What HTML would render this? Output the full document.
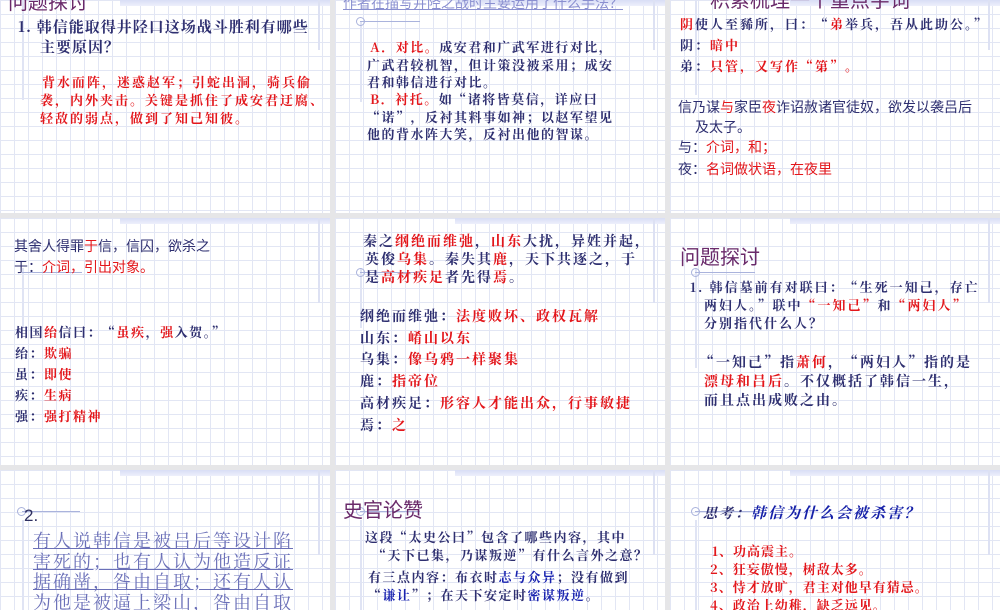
<!DOCTYPE html>
<html><head><meta charset="utf-8"><style>
*{margin:0;padding:0;box-sizing:border-box}
body{width:1000px;height:600px;background:#e6e6e8;position:relative;overflow:hidden;font-family:"Liberation Serif","Noto Serif CJK SC",serif}
.s{position:absolute;overflow:hidden;background-color:#fff;
background-image:linear-gradient(to right,#e2e6f4 1px,transparent 1px),linear-gradient(to bottom,#e2e6f4 1px,transparent 1px);
background-size:14px 14px}
.s .band{position:absolute;top:0;left:120px;right:0;height:6px;background:linear-gradient(#d8def5,#eef0fb)}
.s .vr{position:absolute;width:2px;background:#dde1f3}
.s .vl{position:absolute;width:2px;background:#e0e4f4}
.s .hl{position:absolute;height:1px;background:#aab3dc}
.s .ci{position:absolute;width:9px;height:9px;border:1px solid #aab3dc;border-radius:50%}
.t{position:absolute;white-space:nowrap;color:#2e2f70;font-weight:bold;letter-spacing:2px;font-family:"Noto Serif CJK SC","Liberation Serif",serif}
.n{font-weight:normal;letter-spacing:0;font-family:"Liberation Sans","Noto Sans CJK SC",sans-serif}
.r{color:#e3161b}
.p{color:#6a2a6a;font-weight:normal;letter-spacing:0;font-family:"Liberation Sans","Noto Sans CJK SC",sans-serif}
</style></head><body>

<!-- Row 1 -->
<div class="s" style="left:0;top:0;width:330px;height:213px">
<div class="band"></div><div class="vr" style="left:318px;top:0;height:50px"></div><div class="vl" style="left:22px;top:0;height:100px"></div>
<div class="t p" style="left:8px;top:-14px;font-size:20px">问题探讨</div>
<div class="t" style="left:18px;top:16px;font-size:15px;letter-spacing:1px">1. 韩信能取得井陉口这场战斗胜利有哪些</div>
<div class="t" style="left:40px;top:36px;font-size:15px;letter-spacing:1px">主要原因？</div>
<div class="t r" style="left:42px;top:72px;font-size:13px">背水而阵，迷惑赵军；引蛇出洞，骑兵偷</div>
<div class="t r" style="left:40px;top:90px;font-size:13px">袭，内外夹击。关键是抓住了成安君迂腐、</div>
<div class="t r" style="left:40px;top:108px;font-size:13px">轻敌的弱点，做到了知己知彼。</div>
</div>

<div class="s" style="left:335px;top:0;width:330px;height:213px">
<div class="band"></div><div class="vr" style="left:318px;top:0;height:50px"></div><div class="vl" style="left:25px;top:22px;height:80px"></div>
<div class="ci" style="left:21px;top:17px"></div><div class="hl" style="left:25px;top:21px;width:60px"></div>
<div class="t n" style="left:8px;top:-7px;font-size:14px;color:#8a8fd0;text-decoration:underline">作者在描写井陉之战时主要运用了什么手法？</div>
<div class="t" style="left:35px;top:37px;font-size:13px;letter-spacing:1.5px"><span class="r">A．对比。</span>成安君和广武军进行对比，</div>
<div class="t" style="left:32px;top:55px;font-size:13px;letter-spacing:1.5px">广武君较机智，但计策没被采用；成安</div>
<div class="t" style="left:32px;top:72px;font-size:13px;letter-spacing:1.5px">君和韩信进行对比。</div>
<div class="t" style="left:35px;top:89px;font-size:13px;letter-spacing:1.5px"><span class="r">B．衬托。</span>如“诸将皆莫信，详应曰</div>
<div class="t" style="left:32px;top:107px;font-size:13px;letter-spacing:1.5px">“诺”，反衬其料事如神；以赵军望见</div>
<div class="t" style="left:32px;top:124px;font-size:13px;letter-spacing:1.5px">他的背水阵大笑，反衬出他的智谋。</div>
</div>

<div class="s" style="left:670px;top:0;width:330px;height:213px">
<div class="band"></div><div class="vr" style="left:318px;top:0;height:50px"></div><div class="vl" style="left:25px;top:0;height:95px"></div>
<div class="t p" style="left:40px;top:-16px;font-size:20px">积累梳理一个重点字词</div>
<div class="t" style="left:10px;top:14px;font-size:13px"><span class="r">阴</span>使人至豨所，曰：“<span class="r">弟</span>举兵，吾从此助公。”</div>
<div class="t" style="left:10px;top:35px;font-size:13px">阴：<span class="r">暗中</span></div>
<div class="t" style="left:10px;top:56px;font-size:13px">弟：<span class="r">只管，又写作“第”。</span></div>
<div class="t n" style="left:8px;top:97px;font-size:14px">信乃谋<span class="r">与</span>家臣<span class="r">夜</span>诈诏赦诸官徒奴，欲发以袭吕后</div>
<div class="t n" style="left:25px;top:117px;font-size:14px">及太子。</div>
<div class="t n" style="left:8px;top:137px;font-size:14px">与：<span class="r">介词，和；</span></div>
<div class="t n" style="left:8px;top:159px;font-size:14px">夜：<span class="r">名词做状语，在夜里</span></div>
</div>

<!-- Row 2 -->
<div class="s" style="left:0;top:218px;width:330px;height:247px">
<div class="band"></div><div class="vr" style="left:318px;top:0;height:85px"></div><div class="vl" style="left:22px;top:50px;height:60px"></div>
<div class="hl" style="left:22px;top:54px;width:60px"></div>
<div class="t n" style="left:14px;top:18px;font-size:14px">其舍人得罪<span class="r">于</span>信，信囚，欲杀之</div>
<div class="t n" style="left:14px;top:39px;font-size:14px">于：<span class="r">介词，引出对象。</span></div>
<div class="t" style="left:15px;top:104px;font-size:13px;letter-spacing:1.5px">相国<span class="r">绐</span>信曰：“<span class="r">虽疾</span>，<span class="r">强</span>入贺。”</div>
<div class="t" style="left:15px;top:125px;font-size:13px;letter-spacing:1.5px">绐：<span class="r">欺骗</span></div>
<div class="t" style="left:15px;top:146px;font-size:13px;letter-spacing:1.5px">虽：<span class="r">即使</span></div>
<div class="t" style="left:15px;top:167px;font-size:13px;letter-spacing:1.5px">疾：<span class="r">生病</span></div>
<div class="t" style="left:15px;top:188px;font-size:13px;letter-spacing:1.5px">强：<span class="r">强打精神</span></div>
</div>

<div class="s" style="left:335px;top:218px;width:330px;height:247px">
<div class="band"></div><div class="vr" style="left:318px;top:0;height:85px"></div><div class="vl" style="left:25px;top:50px;height:60px"></div>
<div class="ci" style="left:21px;top:50px"></div><div class="hl" style="left:25px;top:54px;width:60px"></div>
<div class="t" style="left:28px;top:13px;font-size:14px">秦之<span class="r">纲绝而维弛</span>，<span class="r">山东</span>大扰，异姓并起，</div>
<div class="t" style="left:30px;top:31px;font-size:14px">英俊<span class="r">乌集</span>。秦失其<span class="r">鹿</span>，天下共逐之，于</div>
<div class="t" style="left:30px;top:49px;font-size:14px">是<span class="r">高材疾足</span>者先得<span class="r">焉</span>。</div>
<div class="t" style="left:25px;top:88px;font-size:14px">纲绝而维弛：<span class="r">法度败坏、政权瓦解</span></div>
<div class="t" style="left:25px;top:110px;font-size:14px">山东：<span class="r">崤山以东</span></div>
<div class="t" style="left:25px;top:131px;font-size:14px">乌集：<span class="r">像乌鸦一样聚集</span></div>
<div class="t" style="left:25px;top:153px;font-size:14px">鹿：<span class="r">指帝位</span></div>
<div class="t" style="left:25px;top:175px;font-size:14px">高材疾足：<span class="r">形容人才能出众，行事敏捷</span></div>
<div class="t" style="left:25px;top:197px;font-size:14px">焉：<span class="r">之</span></div>
</div>

<div class="s" style="left:670px;top:218px;width:330px;height:247px">
<div class="band"></div><div class="vr" style="left:318px;top:0;height:85px"></div><div class="vl" style="left:25px;top:50px;height:100px"></div>
<div class="ci" style="left:21px;top:50px"></div><div class="hl" style="left:25px;top:54px;width:60px"></div>
<div class="t p" style="left:10px;top:23px;font-size:20px">问题探讨</div>
<div class="t" style="left:20px;top:59px;font-size:13px">1. 韩信墓前有对联曰：“生死一知己，存亡</div>
<div class="t" style="left:34px;top:77px;font-size:13px">两妇人。”联中<span class="r">“一知己”</span>和<span class="r">“两妇人”</span></div>
<div class="t" style="left:34px;top:95px;font-size:13px">分别指代什么人？</div>
<div class="t" style="left:30px;top:134px;font-size:14px">“一知己”指<span class="r">萧何</span>，“两妇人”指的是</div>
<div class="t" style="left:34px;top:153px;font-size:14px"><span class="r">漂母和吕后</span>。不仅概括了韩信一生，</div>
<div class="t" style="left:34px;top:172px;font-size:14px">而且点出成败之由。</div>
</div>

<!-- Row 3 -->
<div class="s" style="left:0;top:470px;width:330px;height:140px">
<div class="band"></div><div class="vr" style="left:318px;top:0;height:85px"></div><div class="vl" style="left:22px;top:50px;height:90px"></div>
<div class="ci" style="left:17px;top:37px"></div><div class="hl" style="left:22px;top:41px;width:58px"></div>
<div class="t n" style="left:24px;top:36px;font-size:17px;color:#2e2f60">2.</div>
<div class="t" style="left:33px;top:60px;font-size:18px;font-weight:normal;color:#6b70b8;text-decoration:underline;line-height:20.5px;letter-spacing:2px">有人说韩信是被吕后等设计陷<br>害死的；也有人认为他造反证<br>据确凿，咎由自取；还有人认<br>为他是被逼上梁山，咎由自取</div>
</div>

<div class="s" style="left:335px;top:470px;width:330px;height:140px">
<div class="band"></div><div class="vr" style="left:318px;top:0;height:85px"></div><div class="vl" style="left:25px;top:50px;height:90px"></div>
<div class="ci" style="left:21px;top:37px"></div><div class="hl" style="left:25px;top:41px;width:60px"></div>
<div class="t p" style="left:8px;top:24px;font-size:20px">史官论赞</div>
<div class="t" style="left:30px;top:57px;font-size:13px;letter-spacing:1.5px">这段“太史公曰”包含了哪些内容，其中</div>
<div class="t" style="left:38px;top:75px;font-size:13px;letter-spacing:1.5px">“天下已集，乃谋叛逆”有什么言外之意？</div>
<div class="t" style="left:33px;top:97px;font-size:13px;letter-spacing:1.5px">有三点内容：布衣时<span style="color:#1a24b0">志与众异</span>；没有做到</div>
<div class="t" style="left:33px;top:115px;font-size:13px;letter-spacing:1.5px">“<span style="color:#1a24b0">谦让</span>”；在天下安定时<span style="color:#1a24b0">密谋叛逆</span>。</div>
</div>

<div class="s" style="left:670px;top:470px;width:330px;height:140px">
<div class="band"></div><div class="vr" style="left:318px;top:0;height:85px"></div><div class="vl" style="left:25px;top:50px;height:90px"></div>
<div class="ci" style="left:21px;top:37px"></div><div class="hl" style="left:25px;top:41px;width:60px"></div>
<div class="t" style="left:33px;top:32px;font-size:14px;font-style:italic;color:#2e2f70">思考：<span style="color:#1520a8;font-size:15px">韩信为什么会被杀害？</span></div>
<div class="t r" style="left:42px;top:71px;font-size:13px;letter-spacing:1px">1、功高震主。</div>
<div class="t r" style="left:40px;top:89px;font-size:13px;letter-spacing:1px">2、狂妄傲慢，树敌太多。</div>
<div class="t r" style="left:40px;top:107px;font-size:13px;letter-spacing:1px">3、恃才放旷，君主对他早有猜忌。</div>
<div class="t r" style="left:40px;top:125px;font-size:13px;letter-spacing:1px">4、政治上幼稚，缺乏远见。</div>
</div>

</body></html>
